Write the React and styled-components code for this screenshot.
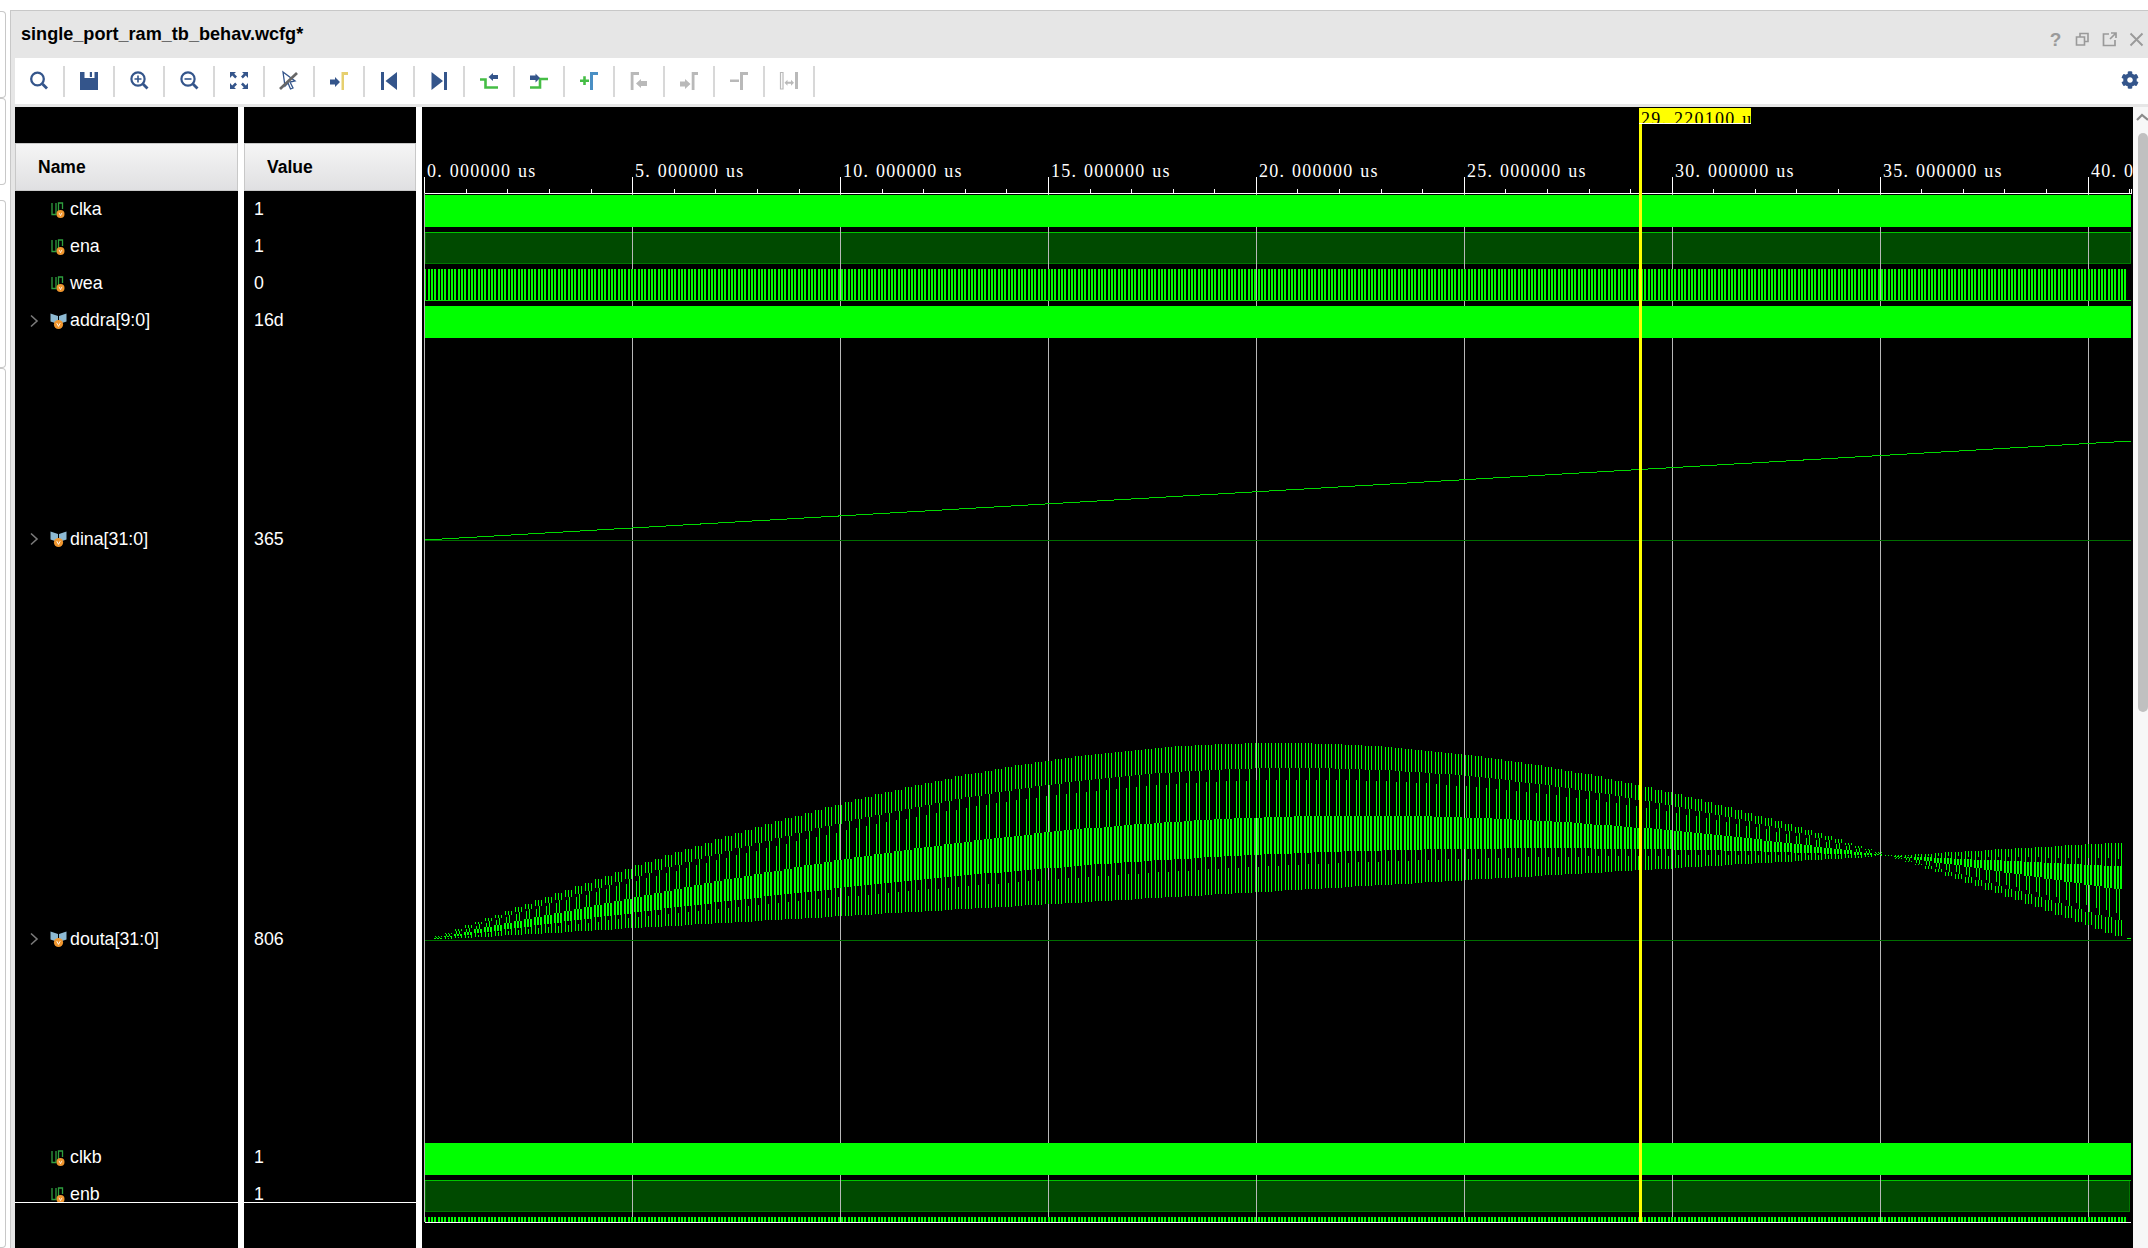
import React from "react";
import styled, { createGlobalStyle } from "styled-components";
import { FaCog } from "react-icons/fa";

const BLUE = "#34558b";
const GOLD = "#e6cf6e";
const GREEN = "#45bd45";
const GREY = "#b9b9b9";

const Global = createGlobalStyle`
  html, body { margin: 0; padding: 0; background: #fff; }
  * { box-sizing: border-box; }
`;

const Page = styled.div`
  width: 2148px;
  height: 1248px;
  display: flex;
  overflow: hidden;
  background: #fff;
  font-family: "Liberation Sans", Arial, sans-serif;
`;
const Rail = styled.div`
  width: 10px;
  flex: none;
  display: flex;
  flex-direction: column;
  padding-top: 11px;
`;
const RailBox = styled.div`
  width: 6px;
  height: ${(p) => p.$h}px;
  margin-bottom: ${(p) => p.$gap || 0}px;
  border: 1px solid #c8c8c8;
  border-left: none;
  border-radius: 0 4px 4px 0;
`;
const Win = styled.div`
  flex: 1;
  margin-top: 10px;
  display: flex;
  flex-direction: column;
  background: #e6e6e6;
  border-top: 1px solid #c8c8c8;
  border-left: 1px solid #c8c8c8;
  min-width: 0;
`;
const TitleBar = styled.div`
  height: 47px;
  flex: none;
  display: flex;
  align-items: center;
  padding: 0 3px 0 10px;
`;
const Title = styled.div`
  font-weight: 700;
  font-size: 18.1px;
  color: #000;
  flex: 1;
`;
const WinControls = styled.div`
  display: flex;
  align-items: center;
  gap: 10px;
  margin-top: 10px;
`;
const Help = styled.span`
  width: 17px;
  text-align: center;
  font-weight: 700;
  font-size: 19px;
  color: #9a9a9a;
`;
const CtlIcon = styled.svg`
  width: 17px;
  height: 17px;
  display: block;
`;
const ToolBar = styled.div`
  height: 46px;
  flex: none;
  margin-left: 4px;
  background: #fff;
  display: flex;
  align-items: center;
`;
const Tool = styled.div`
  width: 48px;
  height: 46px;
  padding-bottom: 2px;
  display: flex;
  align-items: center;
  justify-content: center;
`;
const Sep = styled.div`
  width: 2px;
  height: 31px;
  background: #d8d8d8;
`;
const Gear = styled.div`
  margin-left: auto;
  padding: 0 9px 2px 0;
  color: ${BLUE};
  display: flex;
  font-size: 18px;
`;
const Glyph = styled.svg`
  width: 24px;
  height: 24px;
  display: block;
`;
const Body = styled.div`
  flex: 1;
  margin-top: 3px;
  margin-left: 4px;
  display: flex;
  min-height: 0;
  background: #fff;
`;
const Column = styled.div`
  width: ${(p) => p.$w}px;
  flex: none;
  margin-right: 6px;
  background: #000;
  display: flex;
  flex-direction: column;
`;
const HeadSpacer = styled.div`
  height: 36px;
  flex: none;
`;
const Head = styled.div`
  height: 48px;
  flex: none;
  display: flex;
  align-items: center;
  padding-left: ${(p) => p.$pad}px;
  font-weight: 700;
  font-size: 17.5px;
  color: #000;
  background: linear-gradient(#f5f5f5, #e0e0e2);
  border: 1px solid #c8c8c8;
`;
const Rows = styled.div`
  height: 1012px;
  flex: none;
  overflow: hidden;
  border-bottom: 1px solid #fff;
`;
const NameRow = styled.div`
  height: ${(p) => (p.$tall ? 400 : 37)}px;
  display: flex;
  align-items: center;
  color: #fff;
  font-size: 17.8px;
  padding-left: ${(p) => p.$pad}px;
`;
const Chevron = styled.svg`
  width: 10px;
  height: 14px;
  margin-left: 14px;
  margin-right: 11px;
  flex: none;
`;
const SigIcon = styled.svg`
  width: 18px;
  height: 18px;
  flex: none;
  margin-right: 2px;
`;
const WavePane = styled.div`
  position: relative;
  width: 1711px;
  flex: none;
  background: #000;
  overflow: hidden;
`;
const WaveSvg = styled.svg`
  display: block;
  width: 1711px;
  height: 1141px;
`;
const Flag = styled.div`
  position: absolute;
  left: 1217px;
  top: 1px;
  width: 112px;
  height: 16px;
  background: #ffff00;
  border-bottom: 1px solid #fff;
  overflow: hidden;
  padding-left: 2px;
  font-family: "Liberation Serif", serif;
  font-size: 18px;
  line-height: 23px;
  letter-spacing: 1.25px;
  word-spacing: 1px;
  white-space: nowrap;
  color: #000;
`;
const CursorLine = styled.div`
  position: absolute;
  left: 1217px;
  top: 16px;
  width: 3px;
  height: 1099px;
  background: #ffff00;
`;
const ScrollBar = styled.div`
  flex: 1;
  background: #f7f7f7;
  display: flex;
  flex-direction: column;
  align-items: flex-end;
`;
const ScrollUp = styled.svg`
  width: 12px;
  height: 26px;
  display: block;
  flex: none;
`;
const Thumb = styled.div`
  width: 10px;
  height: 579px;
  background: #c0c0c0;
  border-radius: 5px;
`;

const Step = ({ d, fill, stroke, w = 2.4 }) => (
  <path d={d} fill={fill || "none"} stroke={stroke || "none"} strokeWidth={stroke ? w : 0} />
);

const icons = [
  <>
    <circle cx="10.5" cy="11" r="6.3" fill="none" stroke={BLUE} strokeWidth="2.3" />
    <path d="M15.5 16 L20 20.5" stroke={BLUE} strokeWidth="2.8" />
  </>,
  <>
    <path d="M3 4H21V22H3Z" fill={BLUE} />
    <path d="M7.5 4H17.5V10H7.5Z" fill="#fff" />
    <path d="M12.8 4H15V9H12.8Z" fill={BLUE} />
  </>,
  <>
    <circle cx="11" cy="11" r="6.6" fill="none" stroke={BLUE} strokeWidth="2.2" />
    <path d="M16 16 L20.5 20.5" stroke={BLUE} strokeWidth="2.8" />
    <path d="M7.5 11H14.5M11 7.5V14.5" stroke={BLUE} strokeWidth="1.6" />
  </>,
  <>
    <circle cx="11" cy="11" r="6.6" fill="none" stroke={BLUE} strokeWidth="2.2" />
    <path d="M16 16 L20.5 20.5" stroke={BLUE} strokeWidth="2.8" />
    <path d="M7.5 11H14.5" stroke={BLUE} strokeWidth="1.6" />
  </>,
  <g fill={BLUE}>
    <path d="M3 4H9L7.2 5.8L10 8.6L8.2 10.4L5.2 7.6L3 10Z" />
    <path d="M21 4H15L16.8 5.8L14 8.6L15.8 10.4L18.8 7.6L21 10Z" />
    <path d="M3 21H9L7.2 19.2L10 16.4L8.2 14.6L5.2 17.4L3 15Z" />
    <path d="M21 21H15L16.8 19.2L14 16.4L15.8 14.6L18.8 17.4L21 15Z" />
  </g>,
  <>
    <path d="M6 4L18 13L13 14L16 20L13.5 21L11 15L8 18Z" fill="#fff" stroke={BLUE} strokeWidth="1.3" />
    <path d="M3 21L20 5" stroke="#666" strokeWidth="2.8" />
  </>,
  <>
    <path d="M3 11.5H8V9L13 14L8 19V16.5H3Z" fill={BLUE} />
    <path d="M14.5 22V4H21V7H17V22Z" fill={GOLD} />
  </>,
  <path d="M4 4H7V22H4ZM20 4V22L8.5 13Z" fill={BLUE} />,
  <path d="M20 4H17V22H20ZM4.5 4V22L16 13Z" fill={BLUE} />,
  <>
    <Step d="M3 11.5H8.5V19.5H21" stroke={GREEN} w="2.6" />
    <path d="M11.5 9L16 5V7H21V11H16V13Z" fill={BLUE} />
  </>,
  <>
    <Step d="M3 19.5H13V11H21" stroke={GREEN} w="2.6" />
    <path d="M13 10L8.5 5.5V7.5H3V12H8.5V14.5Z" fill={BLUE} />
  </>,
  <>
    <Step d="M3 12.7H12M7.5 8.3V17" stroke={GREEN} w="2.6" />
    <path d="M13 22V4H21V7H16V22Z" fill="#4a8fc4" />
  </>,
  <path d="M3.7 22V4H12V7H6.5V22ZM9 15.5L14 11V13H20V18H14V20Z" fill={GREY} />,
  <path d="M14.7 22V4H21V7H17.5V22ZM3 13.5H8V11L13.5 16L8 21V18.5H3Z" fill={GREY} />,
  <path d="M13 22V4H21V7H16V22ZM3 11.5H12V14H3Z" fill={GREY} />,
  <>
    <path d="M3.5 4.5H6V21H3.5Z" fill="#fff" stroke={GREY} strokeWidth="1.2" />
    <path d="M18 4H21V21H18ZM7.5 14.7L10.5 11.7V13.7H14V11.7L17 14.7L14 17.7V15.7H10.5V17.7Z" fill={GREY} />
  </>,
];

const BitIcon = () => (
  <SigIcon viewBox="0 0 18 18">
    <path d="M2 2V13.5H6V2M8.5 12V2H12.5V8" fill="none" stroke="#2e9e3e" strokeWidth="1.3" />
    <circle cx="10.5" cy="13" r="4" fill="#f0962e" />
    <path d="M9 11.8L10.5 14.6L12 11.8" fill="none" stroke="#fff" strokeWidth="0.8" />
  </SigIcon>
);
const BusIcon = () => (
  <SigIcon viewBox="0 0 18 18">
    <path d="M0.5 1.5L8 4V12L0.5 9.5ZM16.5 1.5L9 4V12L16.5 9.5Z" fill="#8db9d2" />
    <circle cx="8.5" cy="12.5" r="4.6" fill="#f0962e" />
    <path d="M6.8 11.2L8.5 14.4L10.2 11.2" fill="none" stroke="#fff" strokeWidth="0.9" />
  </SigIcon>
);

const signals = [
  { name: "clka", value: "1" },
  { name: "ena", value: "1" },
  { name: "wea", value: "0" },
  { name: "addra[9:0]", value: "16d", bus: true },
  { name: "dina[31:0]", value: "365", bus: true, tall: true },
  { name: "douta[31:0]", value: "806", bus: true, tall: true },
  { name: "clkb", value: "1" },
  { name: "enb", value: "1" },
];

const X0 = 424.8;
const STEP = 41.58;
const X_END = 2131;
const grid = [0, 5, 10, 15, 20, 25, 30, 35, 40];
const xOf = (t) => Math.floor(X0 + STEP * t) + 0.5;
const labels = ["0. 000000 us", "5. 000000 us", "10. 000000 us", "15. 000000 us", "20. 000000 us", "25. 000000 us", "30. 000000 us", "35. 000000 us", "40. 000000 us"];

const BASE = 940;
function doutaPaths() {
  let thin = "";
  let band = "";
  for (let x = 425; x < 2118; x += 10) {
    const u = (x - 425) / 1700;
    const S = 197 * Math.sin(Math.PI * u);
    const L = 98 * u;
    const y = (f) => Math.round(BASE - (L + f * (S - L)));
    const seg = (c, a, b) => `M${x + c + 0.5} ${y(a)}V${y(b)}`;
    thin += seg(0, 1, 0.83) + seg(1, 0.75, 0.5);
    thin += seg(3, 1, 0.83) + seg(4, 0.83, 0.5);
    thin += seg(6, 1, 0.83);
    thin += seg(0, 0.25, 0) + seg(3, 0.17, 0) + seg(6, 0.25, 0);
    band += `M${x} ${y(0.5)}V${y(0.25)}M${x + 3} ${y(0.5)}V${y(0.25)}M${x + 6} ${y(0.5)}V${y(0.25)}`;
  }
  return { thin, band };
}
const { thin, band } = doutaPaths();

function minorTicks() {
  let d = "";
  for (let t = 0; t * STEP + X0 < X_END; t += 1) {
    const x = Math.floor(X0 + t * STEP) + 0.5;
    d += t % 5 === 0 ? `M${x} 177V193` : `M${x} 189V193`;
  }
  return d;
}

const Stripes = ({ id, x }) => (
  <pattern id={id} x={x} y="0" width="10" height="10" patternUnits="userSpaceOnUse">
    <path d="M0 0H2V10H0ZM3 0H5V10H3ZM6 0H8V10H6Z" fill="#00ff00" />
  </pattern>
);

const Waves = () => (
  <WaveSvg viewBox="422 107 1711 1141" shapeRendering="crispEdges">
    <defs>
      <Stripes id="wea" x="428" />
    </defs>

    <g fill="#004a00" stroke="#007800" strokeWidth="1">
      <rect x="425.5" y="232.5" width="1705" height="31" />
      <rect x="425.5" y="1180.5" width="1704" height="31" />
    </g>
    <path d={`M425 232.5H${X_END}M425 1180.5H${X_END}`} stroke="#00c400" strokeWidth="1" />

    <path d={grid.map((t) => `M${xOf(t)} 193V1222`).join("")} stroke="#b8b8b8" strokeWidth="1" />

    <g fill="#00ff00">
      <rect x="425" y="195" width="1706" height="32" />
      <rect x="425" y="306" width="1706" height="32" />
      <rect x="425" y="1143" width="1706" height="32" />
    </g>
    <rect x="425" y="269" width="1703" height="31" fill="url(#wea)" />
    <path d={`M425 300.5H${X_END}`} stroke="#00e000" />
    <rect x="425" y="1217" width="1703" height="5" fill="url(#wea)" />

    <path d={`M425 540.5H${X_END}M425 940.5H${X_END}`} stroke="#006e00" />
    <path d={`M425 540L${X_END} 441`} stroke="#00d800" strokeWidth="1" />

    <path d={thin} stroke="#00ff00" strokeWidth="1" fill="none" />
    <path d={band} stroke="#00ff00" strokeWidth="2" fill="none" />
    <path d="M2127 938.5H2131" stroke="#00ff00" />

    <g stroke="#fff" strokeWidth="1" fill="none">
      <path d={`M425 193.5H${X_END}.5V189`} />
      <path d={minorTicks()} />
      <path d={`M425 1222.5H${X_END}`} />
    </g>
    <g fill="#fff" fontFamily="'Liberation Serif', serif" fontSize="18" letterSpacing="1.25" wordSpacing="1" shapeRendering="auto">
      {labels.map((l, i) => (
        <text key={l} x={Math.floor(xOf(i * 5)) + 3} y="177">{l}</text>
      ))}
    </g>
  </WaveSvg>
);

export default function App() {
  return (
    <Page>
      <Global />
      <Rail>
        <RailBox $h={87} />
        <RailBox $h={87} $gap={15} />
        <RailBox $h={168} />
        <RailBox $h={880} />
      </Rail>
      <Win>
        <TitleBar>
          <Title>single_port_ram_tb_behav.wcfg*</Title>
          <WinControls>
            <Help>?</Help>
            <CtlIcon viewBox="0 0 17 17">
              <path d="M6 5.5V2.5H14V10.5H11M2.5 6H10.5V14H2.5Z" fill="none" stroke="#9a9a9a" strokeWidth="1.6" />
            </CtlIcon>
            <CtlIcon viewBox="0 0 17 17">
              <path d="M8 3H2.5V14.5H14V9M9 8L14.5 2.5M10 2H15V7" fill="none" stroke="#9a9a9a" strokeWidth="1.7" />
            </CtlIcon>
            <CtlIcon viewBox="0 0 17 17">
              <path d="M2.5 2.5L14.5 14.5M14.5 2.5L2.5 14.5" fill="none" stroke="#9a9a9a" strokeWidth="1.9" />
            </CtlIcon>
          </WinControls>
        </TitleBar>
        <ToolBar>
          {icons.map((g, i) => (
            <React.Fragment key={i}>
              <Tool><Glyph viewBox="0 0 24 24">{g}</Glyph></Tool>
              <Sep />
            </React.Fragment>
          ))}
          <Gear><FaCog /></Gear>
        </ToolBar>
        <Body>
          <Column $w={223}>
            <HeadSpacer />
            <Head $pad={22}>Name</Head>
            <Rows>
              {signals.map((s) => (
                <NameRow key={s.name} $tall={s.tall} $pad={s.bus ? 0 : 35}>
                  {s.bus && (
                    <Chevron viewBox="0 0 10 14">
                      <path d="M2 1.5L8 7L2 12.5" fill="none" stroke="#7a7a7a" strokeWidth="1.6" />
                    </Chevron>
                  )}
                  {s.bus ? <BusIcon /> : <BitIcon />}
                  {s.name}
                </NameRow>
              ))}
            </Rows>
          </Column>
          <Column $w={172}>
            <HeadSpacer />
            <Head $pad={22}>Value</Head>
            <Rows>
              {signals.map((s) => (
                <NameRow key={s.name} $tall={s.tall} $pad={10}>{s.value}</NameRow>
              ))}
            </Rows>
          </Column>
          <WavePane>
            <Waves />
            <CursorLine />
            <Flag>29. 220100 us</Flag>
          </WavePane>
          <ScrollBar>
            <ScrollUp viewBox="0 0 12 26">
              <path d="M1 13L6 8L12 13" fill="none" stroke="#8a8a8a" strokeWidth="2.2" />
            </ScrollUp>
            <Thumb />
          </ScrollBar>
        </Body>
      </Win>
    </Page>
  );
}
